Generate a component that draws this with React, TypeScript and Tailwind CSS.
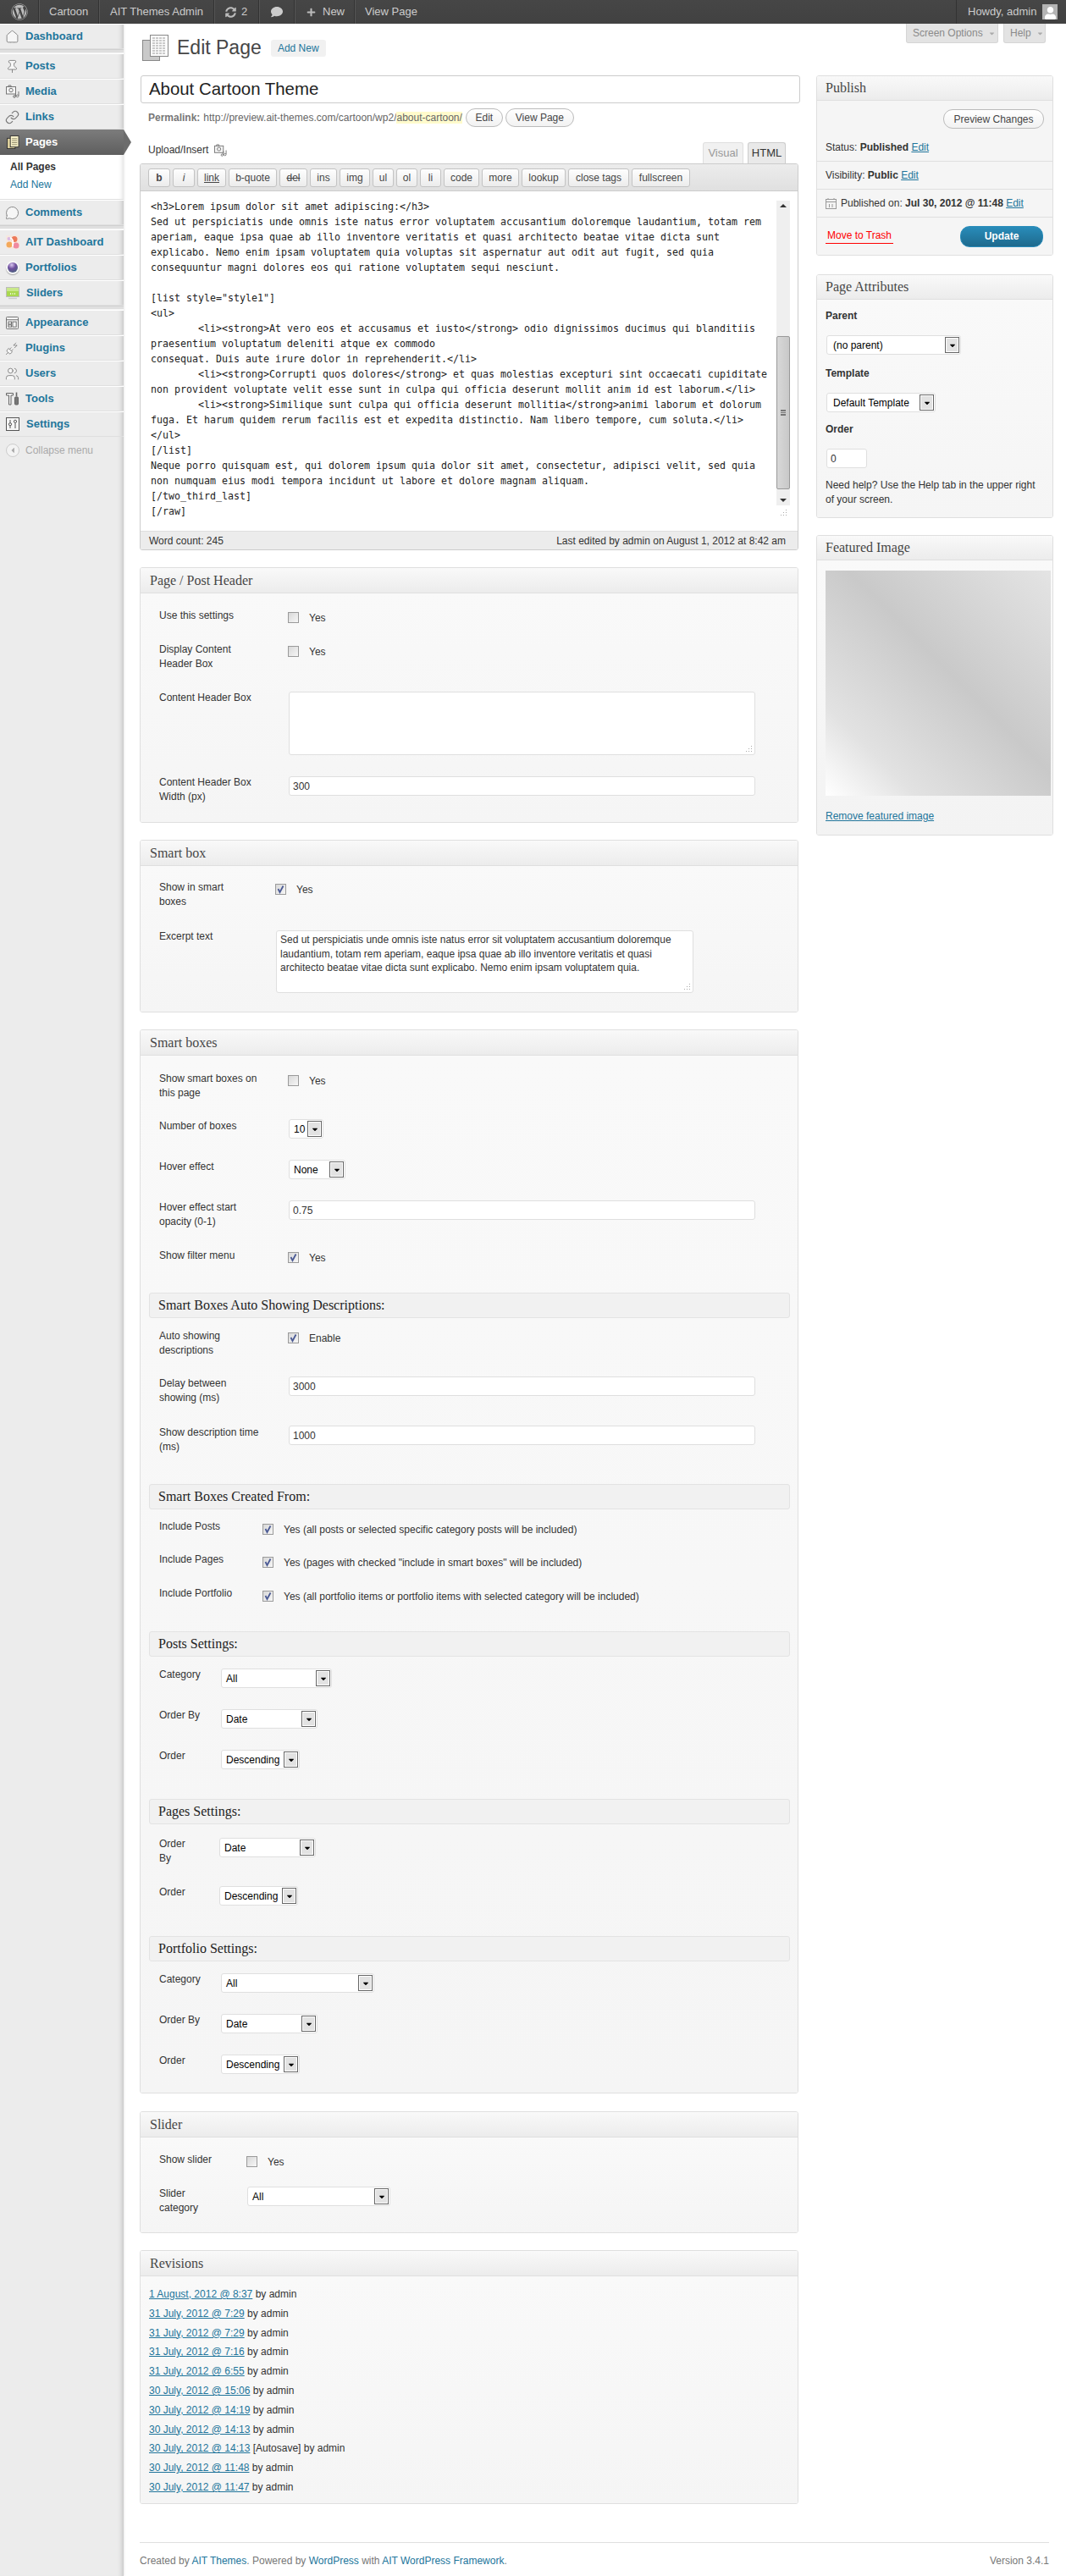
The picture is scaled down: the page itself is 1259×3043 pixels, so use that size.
import React from 'react';
import { FaWordpress, FaComment, FaPlus, FaUser, FaSyncAlt, FaCaretDown, FaCaretLeft } from 'react-icons/fa';
import { Home, Pin, Link, PlugZap, Users, MessageCircle } from 'lucide-react';

const serif = "font-['Liberation_Serif',Georgia,serif]";

const MediaIcon = ({ className }: { className?: string }) => (
    <svg viewBox="0 0 16 16" className={className} fill="none" stroke="#777" strokeWidth="1">
        <rect x="0.5" y="2.5" width="11" height="8.5" fill="#f4f4f4" />
        <circle cx="6" cy="6.5" r="2.2" />
        <path d="M3 2.5V1h3v1.5" />
        <path d="M11.5 9v5M15 8v5" />
        <circle cx="10" cy="14" r="1.3" />
        <circle cx="13.6" cy="13.4" r="1.3" />
    </svg>
);

const PagesIcon = ({ active }: { active?: boolean }) => (
    <svg viewBox="0 0 16 18" className="w-[15px] h-[17px]" stroke={active ? '#333' : '#777'} strokeWidth="1">
        <rect x="0.5" y="3.5" width="10" height="13" fill={active ? '#dccf9c' : '#ddd'} />
        <rect x="4.5" y="0.5" width="10.5" height="14" fill={active ? '#f7f0c8' : '#f5f5f5'} />
        <path d="M6.5 4h6.5M6.5 6.5h6.5M6.5 9h6.5M6.5 11.5h6.5" stroke="#8a8468" />
    </svg>
);

const AitIcon = () => (
    <svg viewBox="0 0 16 16" className="w-4 h-4">
        <rect x="0" y="0" width="16" height="16" rx="1" fill="#f6e8df" />
        <circle cx="10" cy="4.5" r="3.5" fill="#ec7a5a" />
        <circle cx="4" cy="11" r="3.5" fill="#f3a95a" />
        <circle cx="12" cy="12" r="3.5" fill="#f08aa0" />
        <circle cx="3.5" cy="4" r="2" fill="#d9b7e4" />
        <path d="M5 3c3 1 4 5 3 10" stroke="#fff" strokeWidth="1.8" fill="none" />
    </svg>
);

const PortfolioIcon = () => (
    <span className="flex items-center justify-center w-[16px] h-[16px] rounded-full bg-[#f8f8f8] shadow-[0_1px_1px_rgba(0,0,0,0.3)]">
        <span className="block w-[12px] h-[12px] rounded-full bg-[radial-gradient(circle_at_40%_25%,#d9c8f0_0%,#6f4f9e_40%,#3d6a70_100%)]" />
    </span>
);

const SliderIcon = () => (
    <svg viewBox="0 0 16 16" className="w-4 h-4">
        <rect x="0.5" y="1.5" width="15" height="11" fill="#a9d84f" stroke="#bbb" />
        <rect x="1" y="2" width="14" height="4" fill="#c9e88a" />
        <path d="M5 9h1M7.5 9h1M10 9h1" stroke="#fff" strokeWidth="1.4" />
        <path d="M3 14.5h10" stroke="#ccc" strokeWidth="1.4" />
    </svg>
);

const AppearanceIcon = () => (
    <svg viewBox="0 0 16 16" className="w-[15px] h-[15px]" fill="none" stroke="#666">
        <rect x="0.5" y="0.5" width="15" height="15" rx="1" fill="#f6f6f6" />
        <path d="M1 4h14" />
        <rect x="3" y="6.5" width="4" height="3" />
        <rect x="3" y="10.5" width="4" height="2.5" />
        <rect x="8.5" y="6.5" width="4.5" height="6.5" />
    </svg>
);

const ToolsIcon = () => (
    <svg viewBox="0 0 16 16" className="w-4 h-4" fill="#f2f2f2" stroke="#666">
        <path d="M0.5 1.5h8v2.5H6V15H3.5V4H0.5z" />
        <path d="M12.5 0.5v5" fill="none" strokeWidth="1.6" />
        <rect x="10.5" y="6" width="4" height="9" rx="1" fill="#777" />
    </svg>
);

const SettingsIcon = () => (
    <svg viewBox="0 0 16 16" className="w-4 h-4" fill="none" stroke="#555">
        <rect x="0.5" y="0.5" width="15" height="15" fill="#f6f6f6" />
        <path d="M5 3v3.5M5 10v3M11 7v6" />
        <circle cx="5" cy="8.2" r="1.6" />
        <circle cx="11" cy="4.8" r="1.6" />
    </svg>
);

const NavItem = ({ icon, label, textClass = 'pl-[7px]' }: { icon: React.ReactNode; label: string; textClass?: string }) => (
    <div className="flex items-center h-[30px] pl-[6px] border-t border-t-white border-b border-b-[#dfdfdf]">
        <span className="w-[17px] h-[18px] flex items-center justify-center shrink-0">{icon}</span>
        <span className={`text-[13px] font-bold text-[#21759b] ${textClass}`}>{label}</span>
    </div>
);

const NavSep = () => <div className="h-[5px] bg-[#dfdfdf] border-t border-t-[#d0d0d0] border-b border-b-[#f4f4f4]" />;

const grayIcon = 'w-[17px] h-[17px] text-[#777]';

const Sidebar = () => (
    <aside className="relative w-[146px] shrink-0 bg-[#ececec] shadow-[inset_-7px_0_6px_-6px_rgba(0,0,0,0.22),1px_0_2px_rgba(0,0,0,0.08)]">
        <NavItem icon={<Home className={grayIcon} strokeWidth={1.2} fill="#f6f6f6" />} label="Dashboard" />
        <NavSep />
        <NavItem icon={<Pin className={grayIcon} strokeWidth={1.2} fill="#f6f6f6" />} label="Posts" />
        <NavItem icon={<MediaIcon className="w-[16px] h-[16px]" />} label="Media" />
        <NavItem icon={<Link className={grayIcon} strokeWidth={1.6} />} label="Links" />
        <div className="relative flex items-center h-[30px] pl-[7px] bg-[linear-gradient(#7c7c7c,#5e5e5e)]">
            <span className="w-[16px] h-[18px] flex items-center justify-center shrink-0"><PagesIcon active /></span>
            <span className="text-[13px] font-bold text-white pl-[7px]">Pages</span>
            <span className="absolute left-[146px] top-0 border-y-[15px] border-l-[9px] border-y-transparent border-l-[#6c6c6c]" />
        </div>
        <div className="bg-white h-[53px] pl-[12px] pt-[4px] text-[12px] leading-[21px] border-b border-b-[#dfdfdf] shadow-[inset_-6px_0_6px_-6px_rgba(0,0,0,0.2)]">
            <div className="font-bold text-[#333]">All Pages</div>
            <div className="text-[#21759b]">Add New</div>
        </div>
        <NavItem icon={<MessageCircle className={grayIcon} strokeWidth={1.2} fill="#f6f6f6" />} label="Comments" />
        <NavSep />
        <NavItem icon={<AitIcon />} label="AIT Dashboard" />
        <NavItem icon={<PortfolioIcon />} label="Portfolios" />
        <NavItem icon={<SliderIcon />} label="Sliders" textClass="pl-[8px]" />
        <NavSep />
        <NavItem icon={<AppearanceIcon />} label="Appearance" />
        <NavItem icon={<PlugZap className={grayIcon} strokeWidth={1.2} fill="#f6f6f6" />} label="Plugins" />
        <NavItem icon={<Users className={grayIcon} strokeWidth={1.2} fill="#f6f6f6" />} label="Users" />
        <NavItem icon={<ToolsIcon />} label="Tools" />
        <NavItem icon={<SettingsIcon />} label="Settings" textClass="pl-[8px]" />
        <div className="flex items-center h-[32px] pl-[7px] text-[12px] text-[#aaa]">
            <span className="w-[16px] h-[16px] rounded-full border border-[#ccc] bg-[#f3f3f3] flex items-center justify-center">
                <FaCaretLeft className="w-[10px] h-[10px] text-[#aaa]" />
            </span>
            <span className="pl-[7px]">Collapse menu</span>
        </div>
    </aside>
);

const BarItem = ({ className, children }: { className: string; children: React.ReactNode }) => (
    <div className={`flex items-center h-full border-r border-r-[#333] shadow-[1px_0_0_#555] shrink-0 ${className}`}>{children}</div>
);

const AdminBar = () => (
    <header className="flex h-[28px] bg-[linear-gradient(#464646,#414141)] text-[13px] text-[#cccccc]">
        <BarItem className="w-[46px] justify-center"><FaWordpress className="w-[20px] h-[20px] text-[#bbb]" /></BarItem>
        <BarItem className="w-[71px] pl-[12px]">Cartoon</BarItem>
        <BarItem className="w-[136px] pl-[13px]">AIT Themes Admin</BarItem>
        <BarItem className="w-[53px] pl-[13px] gap-[6px]"><FaSyncAlt className="w-[13px] h-[13px] text-[#bbb]" /><span>2</span></BarItem>
        <BarItem className="w-[42px] pl-[14px]"><FaComment className="w-[14px] h-[14px] text-[#ccc]" /></BarItem>
        <BarItem className="w-[71px] pl-[14px] gap-[8px]"><FaPlus className="w-[11px] h-[11px] text-[#bbb]" /><span>New</span></BarItem>
        <div className="flex items-center pl-[12px]">View Page</div>
        <div className="ml-auto flex items-center h-full w-[130px] pl-[13px] border-l border-l-[#333]">
            <span>Howdy, admin</span>
            <span className="ml-[7px] w-[18px] h-[18px] bg-[#b4b4b4] overflow-hidden flex items-end justify-center">
                <FaUser className="w-[15px] h-[15px] text-white" />
            </span>
        </div>
    </header>
);

const Grip = () => (
    <span className="absolute right-[3px] bottom-[3px] grid grid-cols-3 gap-[1px] w-[8px] h-[8px]">
        <i /><i /><i className="w-[1px] h-[1px] bg-[#aaa]" />
        <i /><i className="w-[1px] h-[1px] bg-[#aaa]" /><i className="w-[1px] h-[1px] bg-[#aaa]" />
        <i className="w-[1px] h-[1px] bg-[#aaa]" /><i className="w-[1px] h-[1px] bg-[#aaa]" /><i className="w-[1px] h-[1px] bg-[#aaa]" />
    </span>
);

const MetaBox = ({ title, className = '', bodyClass = '', children }: { title: string; className?: string; bodyClass?: string; children: React.ReactNode }) => (
    <section className={`border border-[#dfdfdf] rounded-[3px] overflow-hidden ${className}`}>
        <h3 className={`${serif} h-[30px] pl-[11px] flex items-center text-[16px] text-[#464646] border-b border-b-[#dfdfdf] bg-[linear-gradient(#f9f9f9,#ececec)]`}>{title}</h3>
        <div className={`bg-[linear-gradient(#f9f9f9,#f5f5f5)] text-[12px] text-[#333] ${bodyClass}`}>{children}</div>
    </section>
);

const SideBox = ({ title, className = '', children }: { title: string; className?: string; children: React.ReactNode }) => (
    <section className={`border border-[#dfdfdf] rounded-[3px] overflow-hidden ${className}`}>
        <h3 className={`${serif} h-[29px] pl-[10px] flex items-center text-[16px] text-[#464646] border-b border-b-[#dfdfdf] bg-[linear-gradient(#f9f9f9,#ececec)]`}>{title}</h3>
        {children}
    </section>
);

const Field = ({ label, labelW = 'w-[153px]', height, children }: { label: string; labelW?: string; height: string; children: React.ReactNode }) => (
    <div className={`flex pl-[22px] ${height}`}>
        <div className={`${labelW} shrink-0 whitespace-pre-line leading-[17px] text-[#333]`}>{label}</div>
        <div>{children}</div>
    </div>
);

const Check = ({ checked, label, gap = 'ml-[12px]' }: { checked?: boolean; label: string; gap?: string }) => (
    <div className="flex items-start -ml-[1px]">
        <span className="relative mt-[4px] w-[13px] h-[13px] shrink-0 border border-[#9a9a9a] bg-[linear-gradient(135deg,#d8d8d8,#f7f7f7)]">
            {checked && (
                <svg viewBox="0 0 11 11" className="absolute inset-0 w-[11px] h-[11px]" fill="none" stroke="#4b5a94" strokeWidth="1.8">
                    <path d="M2.5 5l2 4 4-7.5" />
                </svg>
            )}
        </span>
        <span className={`${gap} mt-[3px] leading-[17px] text-[#333] whitespace-nowrap`}>{label}</span>
    </div>
);

const Select = ({ value, className }: { value: string; className: string }) => (
    <div className={`flex items-center justify-between h-[23px] bg-white border border-[#dfdfdf] rounded-[3px] pl-[5px] pr-[1px] text-[12px] text-black ${className}`}>
        <span>{value}</span>
        <span className="flex items-center justify-center w-[17px] h-[19px] shrink-0 border border-[#666] bg-[#e2e2e2] shadow-[inset_0_0_0_1px_#fff]">
            <FaCaretDown className="w-[10px] h-[10px] text-black" />
        </span>
    </div>
);

const TextInput = ({ value }: { value: string }) => (
    <input readOnly value={value} className="block w-[551px] h-[23px] bg-white border border-[#dfdfdf] rounded-[3px] px-[4px] text-[12px] text-[#333] outline-none" />
);

const Area = ({ className, value = '' }: { className: string; value?: string }) => (
    <div className={`relative ${className}`}>
        <textarea readOnly value={value} className="block w-full h-full resize-none bg-white border border-[#dfdfdf] rounded-[3px] px-[4px] py-[2px] text-[12px] leading-[16.5px] text-[#333] outline-none" />
        <Grip />
    </div>
);

const SubHead = ({ title, className = '' }: { title: string; className?: string }) => (
    <h4 className={`${serif} flex items-center ml-[10px] mr-[9px] h-[30px] pl-[10px] text-[16px] text-[#222] bg-[#f1f1f1] border border-[#e3e3e3] rounded-[3px] ${className}`}>{title}</h4>
);

const editorLines = [
    '<h3>Lorem ipsum dolor sit amet adipiscing:</h3>',
    'Sed ut perspiciatis unde omnis iste natus error voluptatem accusantium doloremque laudantium, totam rem',
    'aperiam, eaque ipsa quae ab illo inventore veritatis et quasi architecto beatae vitae dicta sunt',
    'explicabo. Nemo enim ipsam voluptatem quia voluptas sit aspernatur aut odit aut fugit, sed quia',
    'consequuntur magni dolores eos qui ratione voluptatem sequi nesciunt.',
    '',
    '[list style="style1"]',
    '<ul>',
    '\t<li><strong>At vero eos et accusamus et iusto</strong> odio dignissimos ducimus qui blanditiis',
    'praesentium voluptatum deleniti atque ex commodo',
    'consequat. Duis aute irure dolor in reprehenderit.</li>',
    '\t<li><strong>Corrupti quos dolores</strong> et quas molestias excepturi sint occaecati cupiditate',
    'non provident voluptate velit esse sunt in culpa qui officia deserunt mollit anim id est laborum.</li>',
    '\t<li><strong>Similique sunt culpa qui officia deserunt mollitia</strong>animi laborum et dolorum',
    'fuga. Et harum quidem rerum facilis est et expedita distinctio. Nam libero tempore, cum soluta.</li>',
    '</ul>',
    '[/list]',
    'Neque porro quisquam est, qui dolorem ipsum quia dolor sit amet, consectetur, adipisci velit, sed quia',
    'non numquam eius modi tempora incidunt ut labore et dolore magnam aliquam.',
    '[/two_third_last]',
    '[/raw]',
];

const toolbarButtons = ['b', 'i', 'link', 'b-quote', 'del', 'ins', 'img', 'ul', 'ol', 'li', 'code', 'more', 'lookup', 'close tags', 'fullscreen'];

const Toolbar = () => (
    <div className="flex items-center gap-[3px] h-[32px] pl-[9px] bg-[linear-gradient(#ececec,#e0e0e0)] border-b border-b-[#ccc]">
        {toolbarButtons.map((name) => (
            <button
                key={name}
                className={`h-[22px] rounded-[3px] border border-[#c3c3c3] bg-[linear-gradient(#fefefe,#ececec)] text-[12px] text-[#464646] ${
                    name === 'b' ? 'w-[26px] font-bold' :
                    name === 'i' ? 'w-[26px] italic' :
                    name === 'link' ? 'w-[34px] underline' :
                    name === 'del' ? 'w-[33px] line-through' :
                    name === 'b-quote' ? 'w-[57px]' :
                    name === 'ins' ? 'w-[32px]' :
                    name === 'img' ? 'w-[36px]' :
                    name === 'code' ? 'w-[42px]' :
                    name === 'more' ? 'w-[44px]' :
                    name === 'lookup' ? 'w-[52px]' :
                    name === 'close tags' ? 'w-[72px]' :
                    name === 'fullscreen' ? 'w-[69px]' : 'w-[25px]'
                }`}
            >
                {name}
            </button>
        ))}
    </div>
);

const Editor = () => (
    <div className="border border-[#ccc] rounded-[3px] overflow-hidden">
        <Toolbar />
        <div className="relative h-[401px] bg-white pl-[12px] pt-[9px] overflow-hidden">
            <div className="font-['DejaVu_Sans_Mono',monospace] text-[11.63px] leading-[18px] text-[#222] whitespace-pre [tab-size:8]">
                {editorLines.map((line, i) => (
                    <div key={i} className="h-[18px]">{line}</div>
                ))}
            </div>
            {/* fake scrollbar, the screenshot shows it inside the textarea */}
            <div className="absolute left-[751px] top-[11px] w-[16px] h-[360px] bg-[#efefef]">
                <span className="absolute left-[4px] top-[4px] border-x-[4px] border-b-[4px] border-x-transparent border-b-[#333]" />
                <div className="absolute left-0 top-[160px] w-[16px] h-[181px] bg-[linear-gradient(90deg,#d8d8d8,#c8c8c8)] border border-[#999] rounded-[2px] flex items-center justify-center">
                    <span className="w-[6px] h-[7px] border-y border-[#777] bg-[linear-gradient(#777_1px,transparent_1px)] bg-[length:100%_2px]" />
                </div>
                <span className="absolute left-[4px] bottom-[4px] border-x-[4px] border-t-[4px] border-x-transparent border-t-[#333]" />
            </div>
            <div className="absolute left-[751px] top-[371px] w-[16px] h-[16px]">
                <Grip />
            </div>
        </div>
        <div className="flex items-center justify-between h-[22px] pl-[10px] pr-[14px] bg-[#ececec] border-t border-t-[#dfdfdf] text-[12px] text-[#333]">
            <span>Word count: 245</span>
            <span>Last edited by admin on August 1, 2012 at 8:42 am</span>
        </div>
    </div>
);

const Pill = ({ className = '', children }: { className?: string; children: React.ReactNode }) => (
    <span className={`inline-flex items-center justify-center rounded-[11px] border border-[#bbb] bg-[linear-gradient(#fff,#f2f2f2)] text-[12px] text-[#464646] ${className}`}>{children}</span>
);

const revisions = [
    ['1 August, 2012 @ 8:37', 'by admin'],
    ['31 July, 2012 @ 7:29', 'by admin'],
    ['31 July, 2012 @ 7:29', 'by admin'],
    ['31 July, 2012 @ 7:16', 'by admin'],
    ['31 July, 2012 @ 6:55', 'by admin'],
    ['30 July, 2012 @ 15:06', 'by admin'],
    ['30 July, 2012 @ 14:19', 'by admin'],
    ['30 July, 2012 @ 14:13', 'by admin'],
    ['30 July, 2012 @ 14:13', '[Autosave] by admin'],
    ['30 July, 2012 @ 11:48', 'by admin'],
    ['30 July, 2012 @ 11:47', 'by admin'],
];

const LeftColumn = () => (
    <div className="w-[778px] shrink-0">
        <input readOnly value="About Cartoon Theme" className="block ml-[1px] w-[779px] h-[33px] border border-[#ccc] rounded-[3px] bg-white px-[9px] text-[20.4px] text-[#222] outline-none" />
        <div className="flex items-center h-[22px] mt-[6px] pl-[10px] text-[12px] text-[#666]">
            <b className="font-bold text-[#777]">Permalink:</b>
            <span className="ml-[4px]">http://preview.ait-themes.com/cartoon/wp2/<span className="bg-[#fffbcc]">about-cartoon/</span></span>
            <Pill className="ml-[4px] w-[44px] h-[22px]">Edit</Pill>
            <Pill className="ml-[3px] w-[81px] h-[22px]">View Page</Pill>
        </div>
        <div className="flex items-end justify-between h-[43px] pr-[15px]">
            <div className="flex items-center gap-[7px] pl-[10px] pb-[7px] text-[12px] text-[#333]">
                <span>Upload/Insert</span>
                <MediaIcon className="w-[15px] h-[15px]" />
            </div>
            <div className="flex gap-[5px] text-[13px]">
                <span className="flex items-center justify-center w-[48px] h-[25px] bg-[#f1f1f1] border border-b-0 border-[#dfdfdf] rounded-t-[3px] text-[#999]">Visual</span>
                <span className="flex items-center justify-center w-[45px] h-[25px] bg-[#e9e9e9] border border-b-0 border-[#ccc] rounded-t-[3px] text-[#333]">HTML</span>
            </div>
        </div>
        <Editor />

        <MetaBox title="Page / Post Header" className="mt-[20px]" bodyClass="pt-[18px]">
            <Field label="Use this settings" height="h-[40px]"><Check label="Yes" /></Field>
            <Field label={'Display Content\nHeader Box'} height="h-[57px]"><Check label="Yes" /></Field>
            <Field label="Content Header Box" height="h-[100px]"><Area className="w-[551px] h-[75px] mt-[1px]" /></Field>
            <Field label={'Content Header Box\nWidth (px)'} height="h-[55px]"><div className="mt-[1px]"><TextInput value="300" /></div></Field>
        </MetaBox>

        <MetaBox title="Smart box" className="mt-[20px]" bodyClass="pt-[17px]">
            <Field label={'Show in smart\nboxes'} labelW="w-[138px]" height="h-[58px]"><Check checked label="Yes" /></Field>
            <Field label="Excerpt text" labelW="w-[138px]" height="h-[97px]">
                <Area
                    className="w-[493px] h-[74px] mt-[1px]"
                    value="Sed ut perspiciatis unde omnis iste natus error sit voluptatem accusantium doloremque laudantium, totam rem aperiam, eaque ipsa quae ab illo inventore veritatis et quasi architecto beatae vitae dicta sunt explicabo. Nemo enim ipsam voluptatem quia."
                />
            </Field>
        </MetaBox>

        <MetaBox title="Smart boxes" className="mt-[20px]" bodyClass="pt-[19px]">
            <Field label={'Show smart boxes on\nthis page'} height="h-[56px]"><Check label="Yes" /></Field>
            <Field label="Number of boxes" height="h-[48px]"><Select value="10" className="w-[41px]" /></Field>
            <Field label="Hover effect" height="h-[48px]"><Select value="None" className="w-[67px]" /></Field>
            <Field label={'Hover effect start\nopacity (0-1)'} height="h-[57px]"><TextInput value="0.75" /></Field>
            <Field label="Show filter menu" height="h-[52px]"><Check checked label="Yes" /></Field>

            <SubHead title="Smart Boxes Auto Showing Descriptions:" className="mb-[13px]" />
            <Field label={'Auto showing\ndescriptions'} height="h-[56px]"><Check checked label="Enable" /></Field>
            <Field label={'Delay between\nshowing (ms)'} height="h-[58px]"><TextInput value="3000" /></Field>
            <Field label={'Show description time\n(ms)'} height="h-[69px]"><TextInput value="1000" /></Field>

            <SubHead title="Smart Boxes Created From:" className="mb-[13px]" />
            <Field label="Include Posts" labelW="w-[123px] -mt-[1px]" height="h-[39px]"><Check checked label="Yes (all posts or selected specific category posts will be included)" /></Field>
            <Field label="Include Pages" labelW="w-[123px] -mt-[1px]" height="h-[40px]"><Check checked label='Yes (pages with checked "include in smart boxes" will be included)' /></Field>
            <Field label="Include Portfolio" labelW="w-[123px] -mt-[1px]" height="h-[53px]"><Check checked label="Yes (all portfolio items or portfolio items with selected category will be included)" /></Field>

            <SubHead title="Posts Settings:" className="-mt-[1px] mb-[14px]" />
            <Field label="Category" labelW="w-[73px] -mt-[1px]" height="h-[48px]"><Select value="All" className="w-[131px]" /></Field>
            <Field label="Order By" labelW="w-[73px] -mt-[1px]" height="h-[48px]"><Select value="Date" className="w-[114px]" /></Field>
            <Field label="Order" labelW="w-[73px] -mt-[1px]" height="h-[58px]"><Select value="Descending" className="w-[93px]" /></Field>

            <SubHead title="Pages Settings:" className="mb-[16px]" />
            <Field label={'Order\nBy'} labelW="w-[71px] -mt-[1px]" height="h-[57px]"><Select value="Date" className="w-[114px]" /></Field>
            <Field label="Order" labelW="w-[71px] -mt-[1px]" height="h-[59px]"><Select value="Descending" className="w-[93px]" /></Field>

            <SubHead title="Portfolio Settings:" className="mb-[14px]" />
            <Field label="Category" labelW="w-[73px] -mt-[1px]" height="h-[48px]"><Select value="All" className="w-[181px]" /></Field>
            <Field label="Order By" labelW="w-[73px] -mt-[1px]" height="h-[48px]"><Select value="Date" className="w-[114px]" /></Field>
            <Field label="Order" labelW="w-[73px] -mt-[1px]" height="h-[45px]"><Select value="Descending" className="w-[93px]" /></Field>
        </MetaBox>

        <MetaBox title="Slider" className="mt-[21px]" bodyClass="pt-[18px]">
            <Field label="Show slider" labelW="w-[104px]" height="h-[40px]"><Check label="Yes" /></Field>
            <Field label={'Slider\ncategory'} labelW="w-[104px]" height="h-[54px]"><Select value="All" className="w-[169px]" /></Field>
        </MetaBox>

        <MetaBox title="Revisions" className="mt-[20px]" bodyClass="pt-[10px] pb-[7px] pl-[10px]">
            {revisions.map(([date, rest], i) => (
                <div key={i} className="h-[22.8px] leading-[22.8px]">
                    <a className="text-[#21759b] underline">{date}</a> {rest}
                </div>
            ))}
        </MetaBox>
    </div>
);

const RightColumn = () => (
    <div className="w-[280px] shrink-0 text-[12px] text-[#333]">
        <SideBox title="Publish">
            <div className="bg-[#f5f5f5]">
                <div className="h-[72px] border-b border-b-[#dfdfdf] px-[10px] pt-[10px]">
                    <div className="flex justify-end">
                        <Pill className="w-[119px] h-[23px]">Preview Changes</Pill>
                    </div>
                    <div className="mt-[13px]">Status: <b>Published</b> <a className="text-[#21759b] underline">Edit</a></div>
                </div>
                <div className="flex items-center h-[33px] border-b border-b-[#dfdfdf] px-[10px]">
                    <span>Visibility: <b>Public</b> <a className="text-[#21759b] underline">Edit</a></span>
                </div>
                <div className="flex items-center h-[33px] border-b border-b-[#dfdfdf] px-[10px] gap-[5px]">
                    <svg viewBox="0 0 13 13" className="w-[13px] h-[13px]" fill="#f3f3f3" stroke="#999">
                        <rect x="0.5" y="1.5" width="12" height="11" />
                        <path d="M0.5 4.5h12M3 0v2M10 0v2" />
                        <path d="M4.5 7v4M8 7v4" />
                    </svg>
                    <span>Published on: <b>Jul 30, 2012 @ 11:48</b> <a className="text-[#21759b] underline">Edit</a></span>
                </div>
                <div className="flex items-center justify-between h-[44px] pl-[10px] pr-[11px]">
                    <a className="text-[#ff0000] border-b border-b-[#ff0000] px-[2px] -mt-[2px]">Move to Trash</a>
                    <button className="w-[98px] h-[25px] rounded-[11px] bg-[linear-gradient(#298cba,#1e6a8d)] border border-[#298cba] text-white font-bold text-[12px]">Update</button>
                </div>
            </div>
        </SideBox>

        <SideBox title="Page Attributes" className="mt-[22px]">
            <div className="bg-[linear-gradient(#f9f9f9,#f5f5f5)] h-[257px] pl-[10px] pr-[8px] pt-[11px]">
                <div className="font-bold leading-[17px]">Parent</div>
                <Select value="(no parent)" className="w-[159px] ml-[1px] mt-[14px] pl-[7px]" />
                <div className="font-bold leading-[17px] mt-[14px]">Template</div>
                <Select value="Default Template" className="w-[129px] ml-[1px] mt-[14px] pl-[7px]" />
                <div className="font-bold leading-[17px] mt-[12px]">Order</div>
                <input readOnly value="0" className="block w-[48px] h-[23px] ml-[1px] mt-[14px] bg-white border border-[#dfdfdf] rounded-[3px] px-[4px] text-[12px] text-[#333] outline-none" />
                <p className="mt-[12px] leading-[17px]">Need help? Use the Help tab in the upper right of your screen.</p>
            </div>
        </SideBox>

        <SideBox title="Featured Image" className="mt-[20px]">
            <div className="bg-[linear-gradient(#f9f9f9,#f3f3f3)] h-[324px] pl-[10px] pr-[2px] pt-[12px]">
                <div className="h-[266px] bg-[linear-gradient(to_top_right,#ffffff_0%,#e2e2e2_20%,#c9c9c9_55%,#e4e4e4_100%)]" />
                <a className="block mt-[15px] text-[#21759b] underline">Remove featured image</a>
            </div>
        </SideBox>
    </div>
);

const App: React.FC = () => {
    return (
        <div className="min-h-[3043px] bg-white font-['Liberation_Sans',Arial,sans-serif] flex flex-col">
            <AdminBar />
            <div className="flex flex-1">
                <Sidebar />
                <main className="flex-1 pl-[19px] pr-[15px] min-w-0">
                    <div className="flex justify-end gap-[6px] h-[23px] pr-[9px] text-[12px] text-[#8a8a8a]">
                        <div className="flex items-center gap-[6px] w-[109px] pl-[7px] bg-[#e3e3e3] border border-t-0 border-[#d5d5d5] rounded-b-[3px]">
                            Screen Options <FaCaretDown className="w-[9px] h-[9px] text-[#aaa]" />
                        </div>
                        <div className="flex items-center gap-[6px] w-[50px] pl-[7px] bg-[#e3e3e3] border border-t-0 border-[#d5d5d5] rounded-b-[3px]">
                            Help <FaCaretDown className="w-[9px] h-[9px] text-[#aaa]" />
                        </div>
                    </div>
                    <div className="flex items-start h-[38px] pl-[3px]">
                        <span className="mt-[-10px]">
                            <svg viewBox="0 0 32 31" className="w-[32px] h-[31px]" stroke="#888" strokeWidth="1">
                                <rect x="0.5" y="6.5" width="20" height="24" fill="#c9c9c9" />
                                <rect x="9.5" y="0.5" width="21" height="25" fill="#fbfbfb" />
                                <path d="M12 4h16M12 7h16M12 10h16M12 13h16M12 16h16M12 19h16M12 22h16" stroke="#999" strokeDasharray="3 1" />
                            </svg>
                        </span>
                        <h1 className="ml-[9px] -mt-[11px] text-[23px] leading-[32px] text-[#464646]">Edit Page</h1>
                        <span className="ml-[11px] -mt-[4px] flex items-center justify-center w-[65px] h-[20px] rounded-[3px] bg-[#f1f1f1] text-[12px] text-[#21759b]">Add New</span>
                    </div>
                    <div className="flex gap-[21px]">
                        <LeftColumn />
                        <RightColumn />
                    </div>
                    <footer className="mt-[45px] mr-[5px] pt-[12px] flex justify-between border-t border-t-[#dfdfdf] text-[12px] text-[#777]">
                        <span>Created by <a className="text-[#21759b]">AIT Themes</a>. Powered by <a className="text-[#21759b]">WordPress</a> with <a className="text-[#21759b]">AIT WordPress Framework</a>.</span>
                        <span>Version 3.4.1</span>
                    </footer>
                </main>
            </div>
        </div>
    );
};

export default App;
